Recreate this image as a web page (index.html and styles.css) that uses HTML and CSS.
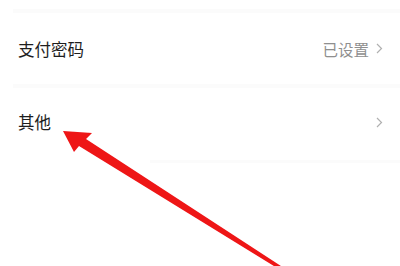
FILE: index.html
```html
<!DOCTYPE html>
<html lang="zh">
<head>
<meta charset="utf-8">
<link rel="stylesheet" href="styles.css">
</head>
<body>
<div class="page">
  <div class="sep"></div>
  <div class="row row-first">
    <span class="label">支付密码</span>
    <span class="right">
      <span class="value">已设置</span>
      <svg class="chev" width="7" height="11" viewBox="0 0 7 11"><polyline points="1,1 5.5,5.5 1,10" fill="none" stroke="#b0b0b0" stroke-width="1.2"/></svg>
    </span>
  </div>
  <div class="sep"></div>
  <div class="row row-second">
    <span class="label">其他</span>
    <span class="right">
      <svg class="chev" width="7" height="11" viewBox="0 0 7 11"><polyline points="1,1 5.5,5.5 1,10" fill="none" stroke="#b0b0b0" stroke-width="1.2"/></svg>
    </span>
  </div>
  <div class="sep sep-short"></div>
  <svg class="arrow" width="400" height="266" viewBox="0 0 400 266">
    <defs>
      <filter id="soft" x="-10%" y="-10%" width="120%" height="120%">
        <feGaussianBlur stdDeviation="0.6"/>
      </filter>
    </defs>
    <polygon points="63,131 92,133 86,139 284,268 282,271 79,146 74,152" fill="#ee1418" filter="url(#soft)"/>
  </svg>
</div>
</body>
</html>
```

FILE: styles.css
```css
html, body {
  margin: 0;
  padding: 0;
  background: #ffffff;
}
.page {
  position: relative;
  width: 400px;
  height: 266px;
  overflow: hidden;
  padding-top: 9px;
  box-sizing: border-box;
  font-family: "Noto Sans CJK SC", "Noto Sans", sans-serif;
}
.sep {
  height: 4px;
  margin-left: 13px;
  background: #fbfbfb;
}
.sep-short {
  margin-left: 150px;
  height: 3px;
}
.row {
  display: flex;
  align-items: center;
  justify-content: space-between;
  padding: 0 17px 0 18px;
}
.row-first {
  height: 71px;
}
.row-second {
  height: 72px;
  padding-bottom: 4px;
  box-sizing: border-box;
}
.label {
  font-size: 16.5px;
  color: #1e1e1e;
  font-weight: 400;
}
.right {
  display: flex;
  align-items: center;
  gap: 7px;
}
.value {
  font-size: 15.5px;
  color: #8f8f8f;
}
.chev {
  display: block;
}
.arrow {
  position: absolute;
  left: 0;
  top: 0;
}
```
